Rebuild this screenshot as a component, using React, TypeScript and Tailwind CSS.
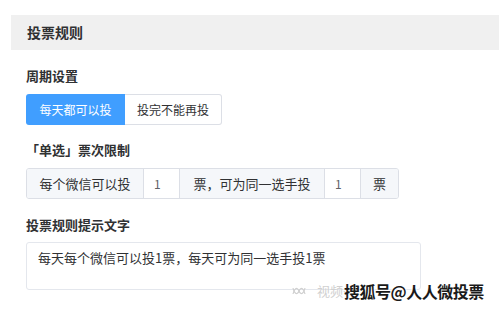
import React from "react"

const font = { fontFamily: '"Noto Sans CJK SC", "Noto Sans", sans-serif' }

function Addon({ text, w }: { text: string; w: string }) {
  return (
    <div className={`flex h-full items-center justify-center bg-[#f5f7fa] text-[13px] text-[#303133] ${w}`}>
      {text}
    </div>
  )
}

function NumInput({ value }: { value: string }) {
  return (
    <div className="flex h-full w-[37px] items-center border-x border-[#dcdfe6] bg-white pl-[10px] text-[12px] text-[#606266]">
      {value}
    </div>
  )
}

export default function App() {
  return (
    <div className="relative h-[313px] w-[499px] overflow-hidden bg-white pt-[15px]" style={font}>
      <div className="ml-[11px] flex h-[35px] items-center bg-[#f0f0f0] pl-[16px] text-[14px] font-semibold text-[#303133]">
        投票规则
      </div>

      <div className="pl-[26px]">
        <div className="mt-[16px] flex h-[20px] items-center text-[13px] font-semibold text-[#303133]">周期设置</div>
        <div className="mt-[8px] flex h-[31px]">
          <button className="w-[99px] rounded-l-[3px] bg-[#409eff] text-[12px] text-white">每天都可以投</button>
          <button className="w-[97px] rounded-r-[3px] border border-l-0 border-[#dcdfe6] bg-white text-[12px] text-[#303133]">投完不能再投</button>
        </div>

        <div className="mt-[15px] flex h-[20px] items-center text-[13px] font-semibold text-[#303133]">「单选」票次限制</div>
        <div className="mt-[8px] flex h-[31px] w-[373px] overflow-hidden rounded-[3px] border border-[#dcdfe6]">
          <Addon text="每个微信可以投" w="w-[116px]" />
          <NumInput value="1" />
          <Addon text="票，可为同一选手投" w="w-[144px]" />
          <NumInput value="1" />
          <Addon text="票" w="flex-1" />
        </div>

        <div className="mt-[16px] flex h-[20px] items-center text-[13px] font-semibold text-[#303133]">投票规则提示文字</div>
        <div className="mt-[7px] h-[48px] w-[395px] rounded-[3px] border border-[#e4e7ed] px-[11px] pt-[5px] text-[13px] leading-[20px] text-[#303133]">
          每天每个微信可以投1票，每天可为同一选手投1票
        </div>
      </div>

      <div className="absolute left-[291px] top-[281px] flex items-center whitespace-nowrap">
        <svg width="16" height="14" viewBox="0 0 16 14" fill="none" stroke="#cfcfcf" strokeWidth="1.2">
          <path d="M2 10c1-5 4-8 6-3s5 2 6-3" />
          <path d="M2 4c1 5 4 8 6 3s5-2 6 3" />
        </svg>
        <span className="ml-[10px] text-[13px] text-[#d0d0d0]">视频号</span>
        <span
          className="ml-[-12px] text-[16px] font-bold leading-[20px] tracking-[-0.5px] text-[#1a1a1a]"
          style={{ textShadow: "1px 0 #fff, -1px 0 #fff, 0 1px #fff, 0 -1px #fff" }}
        >
          搜狐号@人人微投票
        </span>
      </div>
    </div>
  )
}
